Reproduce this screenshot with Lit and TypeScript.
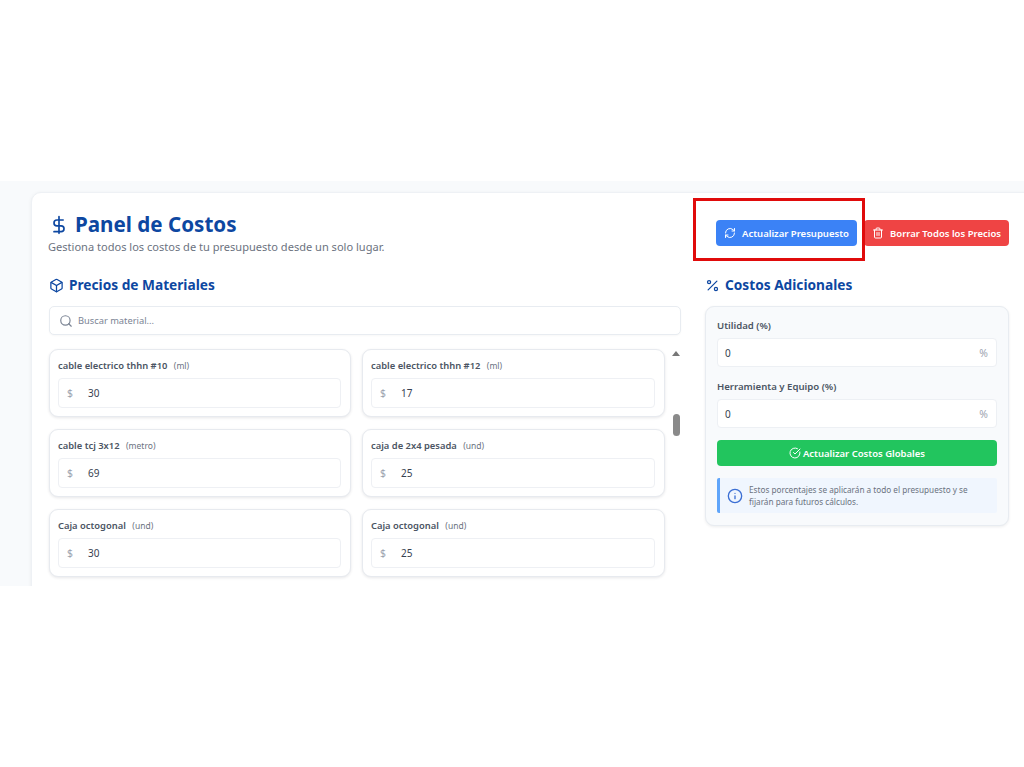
import { LitElement, html, css, svg } from "lit";
import { customElement } from "lit/decorators.js";

const materials = [
  ["cable electrico thhn #10", "ml", "30"],
  ["cable electrico thhn #12", "ml", "17"],
  ["cable tcj 3x12", "metro", "69"],
  ["caja de 2x4 pesada", "und", "25"],
  ["Caja octogonal", "und", "30"],
  ["Caja octogonal", "und", "25"],
];

const icon = (size: number, body: unknown) => html`<svg width=${size} height=${size} viewBox="0 0 24 24" fill="none" stroke="currentColor" stroke-width="2" stroke-linecap="round" stroke-linejoin="round">${body}</svg>`;

@customElement("app-root")
export class AppRoot extends LitElement {
  static styles = css`
    :host { display: block; width: 1024px; height: 767px; background: #fff; overflow: hidden; position: relative; font-family: "Noto Sans", "Open Sans", sans-serif; color: #374151; }
    * { box-sizing: border-box; }
    .band { margin-top: 181px; height: 405px; background: #f8fafc; padding: 11px 0 0 31px; overflow: hidden; }
    .card { width: 1040px; height: 440px; background: #fff; border: 1px solid #eef1f5; border-radius: 10px; box-shadow: 0 1px 4px rgba(15,23,42,.06); padding: 0 0 0 16px; }
    .head { display: flex; justify-content: space-between; width: 961px; padding-top: 17px; height: 82px; }
    h1 { margin: 0; font-size: 20.6px; line-height: 29px; font-weight: 700; color: #0d47a1; display: flex; align-items: center; gap: 7px; }
    h1 svg { margin-left: 1px; margin-right: -1px; }
    .sub { font-size: 11.05px; line-height: 16px; color: #6b7280; }
    .actions { display: flex; gap: 7px; padding-top: 10px; }
    .btn { height: 26px; border-radius: 4px; color: #fff; font-size: 9.5px; font-weight: 600; display: flex; align-items: center; justify-content: center; gap: 6px; }
    .blue { width: 141px; background: #3b82f6; }
    .red { width: 145px; background: #ef4444; }
    .green { width: 100%; background: #22c55e; margin-top: 12px; gap: 2px; }
    .cols { display: flex; gap: 24px; align-items: flex-start; }
    .left { width: 633px; flex: none; }
    .right { width: 304px; flex: none; }
    h2 { margin: 0; font-size: 13.7px; line-height: 20px; font-weight: 700; color: #0d47a1; display: flex; align-items: center; gap: 6px; height: 20px; }
    .left h2 svg { margin-left: 1px; margin-right: -1px; }
    .right h2 { gap: 5px; }
    .search { height: 29px; margin: 11px 0 0 1px; border: 1px solid #e8ecf1; border-radius: 5px; background: #fff; display: flex; align-items: center; gap: 5px; padding-left: 9px; font-size: 9.3px; color: #7b8494; box-shadow: 0 1px 2px rgba(15,23,42,.03); }
    .listwrap { position: relative; margin-top: 14px; }
    .grid { display: grid; grid-template-columns: 302px 303px; column-gap: 11px; row-gap: 12px; margin-left: 1px; }
    .item { height: 68px; border: 1px solid #e7eaef; border-radius: 9px; background: #fff; padding: 9px 9px 0 8px; box-shadow: 0 1px 3px rgba(15,23,42,.1); }
    .name { font-size: 9.4px; line-height: 14px; font-weight: 600; color: #4b5563; }
    .unit { font-size: 8.5px; font-weight: 400; color: #6b7280; margin-left: 4px; }
    .field { height: 30px; margin-top: 5px; border: 1px solid #eef0f4; border-radius: 4px; display: flex; align-items: center; padding: 0 0 1px 8px; font-size: 10px; color: #374151; }
    .cur { width: 21px; color: #9ca3af; font-size: 10.4px; }
    .arrow { position: absolute; left: 624px; top: 2px; width: 0; height: 0; border-left: 4px solid transparent; border-right: 4px solid transparent; border-bottom: 5px solid #777; }
    .thumb { position: absolute; left: 625px; top: 65px; width: 7px; height: 22px; border-radius: 4px; background: #8a8a8a; }
    .panel { margin-top: 11px; width: 304px; height: 220px; border: 1px solid #e8ecf1; border-radius: 9px; background: #f8fafc; padding: 12px 11px 0; box-shadow: 0 1px 3px rgba(15,23,42,.08); }
    label { display: block; font-size: 9.6px; line-height: 14px; font-weight: 600; color: #4b5563; }
    .pct + label { margin-top: 13px; }
    .pct { height: 29px; margin-top: 5px; border: 1px solid #edf0f4; border-radius: 4px; background: #fff; display: flex; justify-content: space-between; align-items: center; padding: 0 8px 0 7px; font-size: 10px; color: #374151; }
    .pct span:last-child { color: #9ca3af; font-size: 10.4px; }
    .info { margin-top: 12px; height: 35px; border-left: 3px solid #60a5fa; border-radius: 2px; background: #f0f6fe; display: flex; align-items: center; gap: 6px; padding-left: 7px; font-size: 8.2px; line-height: 12px; color: #6b7280; }
    .info svg { color: #3b6fd4; flex: none; }
    .mark { position: absolute; left: 693px; top: 198px; width: 172px; height: 63px; border: 3px solid #e00b0b; }
  `;

  render() {
    return html`
      <div class="band">
        <div class="card">
          <div class="head">
            <div>
              <h1>${icon(20, svg`<path d="M12 2v20"/><path d="M17 6H9.5a3.5 3.5 0 0 0 0 7h5a3.5 3.5 0 0 1 0 7H6"/>`)}<span>Panel de Costos</span></h1>
              <div class="sub">Gestiona todos los costos de tu presupuesto desde un solo lugar.</div>
            </div>
            <div class="actions">
              <div class="btn blue">${icon(12, svg`<path d="M3 12a9 9 0 0 1 15-6.7L21 8"/><path d="M21 3v5h-5"/><path d="M21 12a9 9 0 0 1-15 6.7L3 16"/><path d="M8 16H3v5"/>`)}<span>Actualizar Presupuesto</span></div>
              <div class="btn red">${icon(12, svg`<path d="M3 6h18"/><path d="M19 6v14a2 2 0 0 1-2 2H7a2 2 0 0 1-2-2V6"/><path d="M8 6V4a2 2 0 0 1 2-2h4a2 2 0 0 1 2 2v2"/><path d="M10 11v6"/><path d="M14 11v6"/>`)}<span>Borrar Todos los Precios</span></div>
            </div>
          </div>
          <div class="cols">
            <div class="left">
              <h2>${icon(15, svg`<path d="M21 8a2 2 0 0 0-1-1.7l-7-4a2 2 0 0 0-2 0l-7 4A2 2 0 0 0 3 8v8a2 2 0 0 0 1 1.7l7 4a2 2 0 0 0 2 0l7-4a2 2 0 0 0 1-1.7Z"/><path d="m3.3 7 8.7 5 8.7-5"/><path d="M12 22V12"/>`)}<span>Precios de Materiales</span></h2>
              <div class="search">${icon(14, svg`<circle cx="11" cy="11" r="8"/><path d="m21 21-4.3-4.3"/>`)}<span>Buscar material...</span></div>
              <div class="listwrap">
                <div class="grid">
                  ${materials.map(([n, u, v]) => html`
                    <div class="item">
                      <div class="name">${n} <span class="unit">(${u})</span></div>
                      <div class="field"><span class="cur">$</span><span>${v}</span></div>
                    </div>`)}
                </div>
                <div class="arrow"></div>
                <div class="thumb"></div>
              </div>
            </div>
            <div class="right">
              <h2>${icon(15, svg`<path d="M19 5 5 19"/><circle cx="6.5" cy="6.5" r="2.5"/><circle cx="17.5" cy="17.5" r="2.5"/>`)}<span>Costos Adicionales</span></h2>
              <div class="panel">
                <label>Utilidad (%)</label>
                <div class="pct"><span>0</span><span>%</span></div>
                <label>Herramienta y Equipo (%)</label>
                <div class="pct"><span>0</span><span>%</span></div>
                <div class="btn green">${icon(12, svg`<path d="M21.8 10A10 10 0 1 1 17 3.3"/><path d="m9 11 3 3L22 4"/>`)}<span>Actualizar Costos Globales</span></div>
                <div class="info">${icon(16, svg`<circle cx="12" cy="12" r="10"/><path d="M12 16v-4"/><path d="M12 8h.01"/>`)}<span>Estos porcentajes se aplicarán a todo el presupuesto y se<br>fijarán para futuros cálculos.</span></div>
              </div>
            </div>
          </div>
        </div>
      </div>
      <div class="mark"></div>
    `;
  }
}
